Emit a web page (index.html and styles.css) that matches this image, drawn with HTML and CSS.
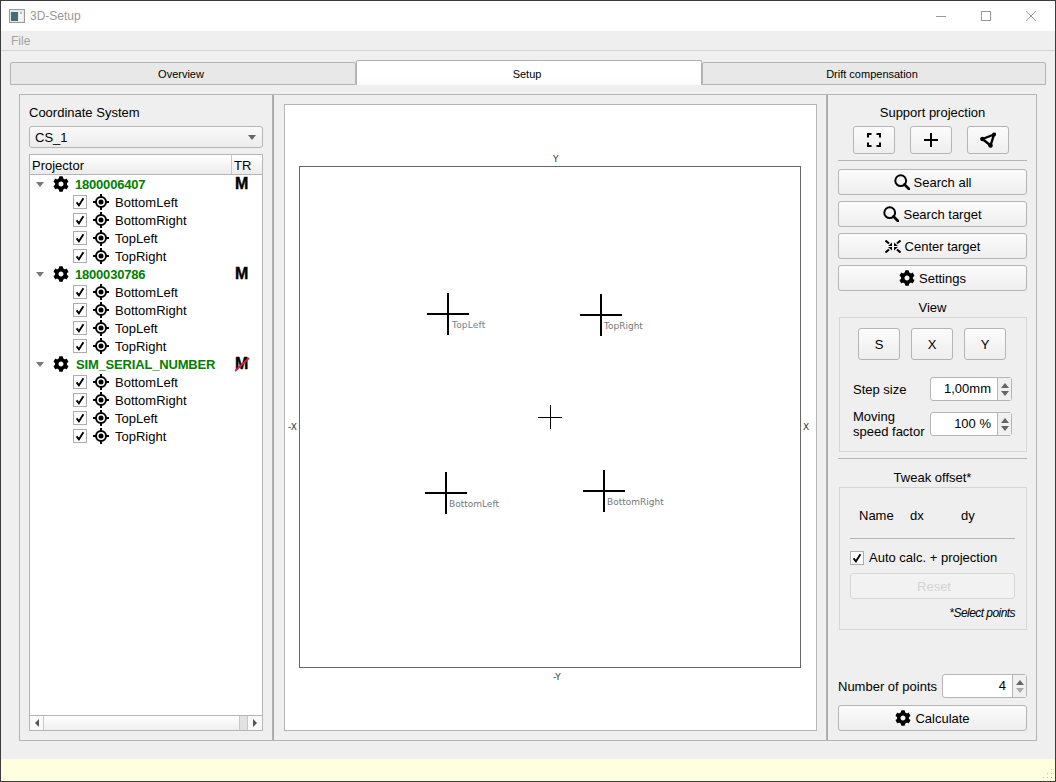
FILE: index.html
```html
<!DOCTYPE html>
<html lang="en">

<head>
    <meta charset="UTF-8">
    <title>3D-Setup</title>
    <link rel="stylesheet" href="styles.css">
</head>

<body>
    <!-- shared icons -->
    <svg class="defs" width="0" height="0">
        <symbol id="gear" viewBox="0 0 512 512">
            <path d="M487.4 315.7l-42.6-24.6c4.3-23.2 4.3-47 0-70.2l42.6-24.6c4.9-2.8 7.1-8.6 5.5-14-11.1-35.6-30-67.8-54.7-94.6-3.8-4.1-10-5.1-14.8-2.3L380.8 110c-17.9-15.4-38.5-27.3-60.8-35.1V25.8c0-5.6-3.9-10.5-9.4-11.7-36.7-8.2-74.3-7.8-109.2 0-5.5 1.2-9.4 6.1-9.4 11.7V75c-22.2 7.9-42.8 19.8-60.8 35.1L88.7 85.5c-4.9-2.8-11-1.9-14.8 2.3-24.7 26.7-43.6 58.9-54.7 94.6-1.7 5.4.6 11.2 5.5 14L67.3 221c-4.3 23.2-4.3 47 0 70.2l-42.6 24.6c-4.9 2.8-7.1 8.6-5.5 14 11.1 35.6 30 67.8 54.7 94.6 3.8 4.1 10 5.1 14.8 2.3l42.6-24.6c17.9 15.4 38.5 27.3 60.8 35.1v49.2c0 5.6 3.9 10.5 9.4 11.7 36.7 8.2 74.3 7.8 109.2 0 5.5-1.2 9.4-6.1 9.4-11.7v-49.2c22.2-7.9 42.8-19.8 60.8-35.1l42.6 24.6c4.9 2.8 11 1.9 14.8-2.3 24.7-26.7 43.6-58.9 54.7-94.6 1.5-5.5-.7-11.3-5.6-14.1zM256 336c-44.1 0-80-35.9-80-80s35.9-80 80-80 80 35.9 80 80-35.9 80-80 80z" />
        </symbol>
        <symbol id="target" viewBox="0 0 16 16">
            <circle cx="8" cy="8" r="5" fill="none" stroke="#000" stroke-width="2" />
            <circle cx="8" cy="8" r="2.500" />
            <path d="M7 0h2v3.500H7zM7 12.500h2V16H7zM0 7h3.500v2H0zM12.500 7H16v2h-3.500z" />
        </symbol>
        <symbol id="check" viewBox="0 0 14 14">
            <path d="M3 7.500l2.700 3.500L11 2.500" fill="none" stroke="#000" stroke-width="2.200" />
        </symbol>
        <symbol id="search" viewBox="0 0 16 16">
            <circle cx="6.700" cy="6.700" r="5.400" fill="none" stroke="#000" stroke-width="2" />
            <path d="M10.500 10.500L15 15" fill="none" stroke="#000" stroke-width="2.600" stroke-linecap="round" />
        </symbol>
    </svg>

    <div class="window">
        <div class="titlebar">
            <svg class="app-icon" width="16" height="14" viewBox="0 0 16 14">
                <rect x="0.500" y="0.500" width="15" height="13" fill="#e8e8e8" stroke="#9a9a9a" />
                <rect x="2" y="3" width="7" height="9" fill="#3f6f78" />
                <rect x="10" y="3" width="4" height="9" fill="#f4f4f4" />
                <rect x="11" y="3" width="2" height="2" fill="#a9c0c8" />
            </svg>
            <span class="title">3D-Setup</span>
            <div class="win-buttons">
                <svg width="12" height="12" viewBox="0 0 12 12"><path d="M1 6.500h10" stroke="#999" /></svg>
                <svg width="12" height="12" viewBox="0 0 12 12"><rect x="1.500" y="1.500" width="9" height="9" fill="none" stroke="#999" /></svg>
                <svg width="12" height="12" viewBox="0 0 12 12"><path d="M1 1l10 10M11 1L1 11" stroke="#999" /></svg>
            </div>
        </div>

        <div class="menubar"><span>File</span></div>

        <div class="tabs">
            <div class="tab">Overview</div>
            <div class="tab active">Setup</div>
            <div class="tab">Drift compensation</div>
        </div>

        <div class="main">
            <div class="left-panel">
                <div class="label">Coordinate System</div>
                <div class="combo">
                    <span>CS_1</span>
                    <span class="combo-arrow"></span>
                </div>

                <div class="tree">
                    <div class="tree-header">
                        <span class="col-name">Projector</span>
                        <span class="col-tr">TR</span>
                    </div>
                    <div class="tree-body">
                        <div class="row parent">
                            <span class="twisty"></span>
                            <svg class="gear-icon"><use href="#gear" /></svg>
                            <span class="serial">1800006407</span>
                            <span class="tr-mark">M</span>
                        </div>
                        <div class="row child"><span class="check"><svg><use href="#check" /></svg></span><svg class="target-icon"><use href="#target" /></svg><span>BottomLeft</span></div>
                        <div class="row child"><span class="check"><svg><use href="#check" /></svg></span><svg class="target-icon"><use href="#target" /></svg><span>BottomRight</span></div>
                        <div class="row child"><span class="check"><svg><use href="#check" /></svg></span><svg class="target-icon"><use href="#target" /></svg><span>TopLeft</span></div>
                        <div class="row child"><span class="check"><svg><use href="#check" /></svg></span><svg class="target-icon"><use href="#target" /></svg><span>TopRight</span></div>

                        <div class="row parent">
                            <span class="twisty"></span>
                            <svg class="gear-icon"><use href="#gear" /></svg>
                            <span class="serial">1800030786</span>
                            <span class="tr-mark">M</span>
                        </div>
                        <div class="row child"><span class="check"><svg><use href="#check" /></svg></span><svg class="target-icon"><use href="#target" /></svg><span>BottomLeft</span></div>
                        <div class="row child"><span class="check"><svg><use href="#check" /></svg></span><svg class="target-icon"><use href="#target" /></svg><span>BottomRight</span></div>
                        <div class="row child"><span class="check"><svg><use href="#check" /></svg></span><svg class="target-icon"><use href="#target" /></svg><span>TopLeft</span></div>
                        <div class="row child"><span class="check"><svg><use href="#check" /></svg></span><svg class="target-icon"><use href="#target" /></svg><span>TopRight</span></div>

                        <div class="row parent">
                            <span class="twisty"></span>
                            <svg class="gear-icon"><use href="#gear" /></svg>
                            <span class="serial sim">SIM_SERIAL_NUMBER</span>
                            <span class="tr-mark struck">M<svg class="strike" width="15" height="15" viewBox="0 0 15 15"><path d="M0 14L14 1" stroke="#d8203c" stroke-width="2" /></svg></span>
                        </div>
                        <div class="row child"><span class="check"><svg><use href="#check" /></svg></span><svg class="target-icon"><use href="#target" /></svg><span>BottomLeft</span></div>
                        <div class="row child"><span class="check"><svg><use href="#check" /></svg></span><svg class="target-icon"><use href="#target" /></svg><span>BottomRight</span></div>
                        <div class="row child"><span class="check"><svg><use href="#check" /></svg></span><svg class="target-icon"><use href="#target" /></svg><span>TopLeft</span></div>
                        <div class="row child"><span class="check"><svg><use href="#check" /></svg></span><svg class="target-icon"><use href="#target" /></svg><span>TopRight</span></div>
                    </div>
                    <div class="hscroll">
                        <span class="scroll-btn"><i class="arrow-left"></i></span>
                        <span class="scroll-track"></span>
                        <span class="scroll-end"></span>
                        <span class="scroll-btn last"><i class="arrow-right"></i></span>
                    </div>
                </div>
            </div>

            <div class="splitter"></div>

            <div class="center-panel">
                <div class="canvas">
                    <div class="plot"></div>
                    <span class="axis ax-top">Y</span>
                    <span class="axis ax-bottom">-Y</span>
                    <span class="axis ax-left">-X</span>
                    <span class="axis ax-right">X</span>

                    <div class="cross c-tl"><span>TopLeft</span></div>
                    <div class="cross c-tr"><span>TopRight</span></div>
                    <div class="cross c-bl"><span>BottomLeft</span></div>
                    <div class="cross c-br"><span>BottomRight</span></div>
                    <div class="cross-center"></div>
                </div>
            </div>

            <div class="splitter"></div>

            <div class="right-panel">
                <div class="label center">Support projection</div>
                <div class="icon-row">
                    <button class="btn icon-btn">
                        <svg width="14" height="14" viewBox="0 0 14 14"><path d="M1 4.500V1h3.500M9.500 1H13v3.500M13 9.500V13H9.500M4.500 13H1V9.500" fill="none" stroke="#000" stroke-width="2" /></svg>
                    </button>
                    <button class="btn icon-btn">
                        <svg width="14" height="14" viewBox="0 0 14 14"><path d="M7 0v14M0 7h14" stroke="#000" stroke-width="2" /></svg>
                    </button>
                    <button class="btn icon-btn">
                        <svg width="16" height="16" viewBox="0 0 16 16"><path d="M2.500 7L14 2.500L10.500 13.500Z" fill="none" stroke="#000" stroke-width="2.400" /><circle cx="2.500" cy="7" r="2.300" /><circle cx="14" cy="2.500" r="2" /><circle cx="10.500" cy="13.500" r="2.300" /></svg>
                    </button>
                </div>
                <div class="sep sep-top"></div>

                <div class="action-list">
                    <button class="btn action"><svg width="16" height="16"><use href="#search" /></svg>Search all</button>
                    <button class="btn action"><svg width="16" height="16"><use href="#search" /></svg>Search target</button>
                    <button class="btn action">
                        <svg width="16" height="13" viewBox="0 0 16 13"><path d="M.5 .5l3.500 3M15.500 .5l-3.500 3M.5 12.500l3.500-3M15.500 12.500l-3.500-3" stroke="#000" stroke-width="2" /><path d="M7 6V2.500L3 6zM9 6V2.500L13 6zM7 7v3.500L3 7zM9 7v3.500L13 7z" /></svg>
                        Center target
                    </button>
                    <button class="btn action"><svg class="gear-icon"><use href="#gear" /></svg>Settings</button>
                </div>

                <div class="label center view-title">View</div>
                <div class="box view-box">
                    <div class="view-buttons">
                        <button class="btn view-btn">S</button>
                        <button class="btn view-btn">X</button>
                        <button class="btn view-btn">Y</button>
                    </div>
                    <div class="field step-field">
                        <span>Step size</span>
                        <div class="spin">
                            <span class="spin-value">1,00mm</span>
                            <span class="spin-arrows"><i class="up"></i><i class="down"></i></span>
                        </div>
                    </div>
                    <div class="field speed-field">
                        <span>Moving<br>speed factor</span>
                        <div class="spin">
                            <span class="spin-value">100 %</span>
                            <span class="spin-arrows"><i class="up"></i><i class="down"></i></span>
                        </div>
                    </div>
                </div>

                <div class="sep sep-mid"></div>

                <div class="label center tweak-title">Tweak offset*</div>
                <div class="box tweak-box">
                    <div class="offset-head">
                        <span class="h-name">Name</span>
                        <span class="h-dx">dx</span>
                        <span>dy</span>
                    </div>
                    <div class="sep offset-sep"></div>
                    <div class="auto-row">
                        <span class="check"><svg><use href="#check" /></svg></span>
                        <span>Auto calc. + projection</span>
                    </div>
                    <button class="btn reset" disabled>Reset</button>
                    <div class="note">*Select points</div>
                </div>

                <div class="points-row">
                    <span>Number of points</span>
                    <div class="spin points-spin">
                        <span class="spin-value">4</span>
                        <span class="spin-arrows"><i class="up"></i><i class="down faded"></i></span>
                    </div>
                </div>
                <button class="btn action calculate"><svg class="gear-icon"><use href="#gear" /></svg>Calculate</button>
            </div>
        </div>

        <div class="statusbar">
            <svg class="grip" width="14" height="12" viewBox="0 0 14 12" fill="#c4c4c4">
                <rect x="11" y="1" width="1" height="1" />
                <rect x="7" y="5" width="1" height="1" /><rect x="11" y="5" width="1" height="1" />
                <rect x="3" y="9" width="1" height="1" /><rect x="7" y="9" width="1" height="1" /><rect x="11" y="9" width="1" height="1" />
            </svg>
        </div>
    </div>
</body>

</html>
```

FILE: styles.css
```css
* {
    box-sizing: border-box;
}

body {
    margin: 0;
    font-family: "Liberation Sans", Arial, sans-serif;
    font-size: 13px;
    color: #000;
    overflow: hidden;
}

button {
    font: inherit;
    color: inherit;
}

.defs {
    position: absolute;
}

.window {
    width: 1056px;
    height: 782px;
    display: flex;
    flex-direction: column;
    background-color: #efefef;
    border: 1px solid #3c3c3c;
}

/* title and menu */
.titlebar {
    height: 30px;
    display: flex;
    align-items: center;
    background-color: #fff;
    padding-left: 8px;
}

.title {
    margin-left: 5px;
    font-size: 12px;
    color: #999;
}

.win-buttons {
    margin-left: auto;
    display: flex;
    gap: 33px;
    padding-right: 18px;
}

.menubar {
    height: 20px;
    padding-left: 10px;
    line-height: 20px;
    font-size: 12px;
    color: #a2a2a2;
    border-bottom: 1px solid #d2d2d2;
}

/* tabs */
.tabs {
    display: flex;
    height: 25px;
    margin: 9px 9px 0;
}

.tab {
    width: 346px;
    height: 23px;
    margin-top: 2px;
    padding-right: 4px;
    text-align: center;
    font-size: 11px;
    line-height: 23px;
    background-color: #e8e8e8;
    border: 1px solid #b4b4b4;
    border-radius: 2px 2px 0 0;
}

.tab:last-child {
    width: 344px;
}

.tab.active {
    height: 25px;
    margin-top: 0;
    line-height: 26px;
    background: linear-gradient(#fff, #fff 70%, #fbfbfb);
    border-bottom: none;
}

/* main split */
.main {
    height: 647px;
    margin: 9px 18px 0;
    display: flex;
    border: 1px solid #b5b5b5;
}

.left-panel {
    width: 252px;
    padding: 9px;
    display: flex;
    flex-direction: column;
}

.splitter {
    width: 2px;
    background-color: #7fb2e0;
    border-left: 1px solid #b0b0b0;
}

.center-panel {
    flex: 1;
    padding: 9px 9px 9px 10px;
    display: flex;
}

.right-panel {
    width: 208px;
    padding: 9px 9px 9px 10px;
    display: flex;
    flex-direction: column;
}

.label {
    height: 16px;
    line-height: 18px;
}

.center {
    text-align: center;
}

/* combo box */
.combo {
    height: 22px;
    margin-top: 6px;
    padding: 0 6px 0 5px;
    display: flex;
    align-items: center;
    justify-content: space-between;
    background: linear-gradient(#fafafa, #ececec);
    border: 1px solid #b5b5b5;
    border-radius: 3px;
}

.combo-arrow {
    border-left: 4px solid transparent;
    border-right: 4px solid transparent;
    border-top: 5px solid #666;
}

/* projector tree */
.tree {
    flex: 1;
    margin-top: 6px;
    display: flex;
    flex-direction: column;
    background-color: #fff;
    border: 1px solid #b5b5b5;
}

.tree-header {
    height: 20px;
    display: flex;
    line-height: 21px;
    background: linear-gradient(#fff, #ececec);
    border-bottom: 1px solid #b5b5b5;
}

.col-name {
    width: 202px;
    padding-left: 2px;
    border-right: 1px solid #c8c8c8;
}

.col-tr {
    padding-left: 2px;
}

.tree-body {
    flex: 1;
}

.row {
    height: 18px;
    display: flex;
    align-items: center;
}

.parent {
    padding-left: 6px;
}

.child {
    padding-left: 43px;
}

.twisty {
    width: 0;
    border-left: 4px solid transparent;
    border-right: 4px solid transparent;
    border-top: 5px solid #777;
}

.gear-icon {
    width: 16px;
    height: 16px;
}

.parent .gear-icon {
    margin-left: 9px;
}

.serial {
    width: 160px;
    margin-left: 6px;
    font-weight: bold;
    color: #008000;
    letter-spacing: -0.2px;
}

.serial.sim {
    margin-left: 7px;
    width: 159px;
    letter-spacing: -0.18px;
}

.tr-mark {
    position: relative;
    font-size: 16px;
    font-weight: bold;
    line-height: 16px;
    -webkit-text-stroke: 0.4px #000;
}

.strike {
    position: absolute;
    left: 0;
    top: 1px;
}

.check {
    width: 14px;
    height: 14px;
    flex: none;
    background-color: #fff;
    border: 1px solid #adadad;
    display: flex;
}

.check svg {
    width: 12px;
    height: 12px;
}

.target-icon {
    width: 16px;
    height: 16px;
    margin: 0 6px;
}

/* horizontal scrollbar */
.hscroll {
    height: 15px;
    display: flex;
    border-top: 1px solid #b5b5b5;
}

.scroll-btn {
    width: 14px;
    display: flex;
    align-items: center;
    justify-content: center;
    background-color: #fafafa;
    border-right: 1px solid #c8c8c8;
}

.scroll-btn.last {
    border-right: none;
}

.scroll-track {
    flex: 1;
    background: linear-gradient(#fff, #efefef);
    border-right: 1px solid #c8c8c8;
}

.scroll-end {
    width: 8px;
    background-color: #e2e2e2;
    border-right: 1px solid #c8c8c8;
}

.arrow-left {
    border-top: 4px solid transparent;
    border-bottom: 4px solid transparent;
    border-right: 4px solid #555;
}

.arrow-right {
    border-top: 4px solid transparent;
    border-bottom: 4px solid transparent;
    border-left: 4px solid #555;
}

/* canvas with the points */
.canvas {
    flex: 1;
    position: relative;
    background-color: #fff;
    border: 1px solid #b5b5b5;
}

.plot {
    position: absolute;
    left: 14px;
    top: 61px;
    width: 502px;
    height: 502px;
    border: 1px solid #666;
}

.axis {
    position: absolute;
    font-family: "DejaVu Sans", sans-serif;
    font-size: 9px;
    line-height: 12px;
    color: #333;
}

.ax-top { left: 268px; top: 48px; }
.ax-bottom { left: 268px; top: 566px; }
.ax-left { left: 3px; top: 316px; }
.ax-right { left: 518px; top: 316px; }

.cross {
    position: absolute;
    width: 42px;
    height: 42px;
}

.cross::before {
    content: "";
    position: absolute;
    left: 20px;
    top: 0;
    width: 2px;
    height: 42px;
    background-color: #000;
}

.cross::after {
    content: "";
    position: absolute;
    left: 0;
    top: 20px;
    width: 42px;
    height: 2px;
    background-color: #000;
}

.cross span {
    position: absolute;
    left: 24px;
    top: 26px;
    font-family: "DejaVu Sans", sans-serif;
    font-size: 9px;
    line-height: 12px;
    color: #777;
    white-space: nowrap;
}

.c-tl { left: 142px; top: 188px; }
.c-tr { left: 295px; top: 189px; }
.c-bl { left: 140px; top: 367px; }
.c-br { left: 298px; top: 365px; }

.c-tl span {
    left: 25px;
    color: #6f7f94;
    letter-spacing: 0.2px;
}

.cross-center {
    position: absolute;
    left: 253px;
    top: 300px;
    width: 24px;
    height: 24px;
    background:
        linear-gradient(#000, #000) 12px 0 / 1px 24px no-repeat,
        linear-gradient(#000, #000) 0 12px / 24px 1px no-repeat;
}

/* right column */
.btn {
    padding: 0;
    display: flex;
    align-items: center;
    justify-content: center;
    background: linear-gradient(#fcfcfc, #eeeeee);
    border: 1px solid #b5b5b5;
    border-radius: 3px;
}

.icon-row {
    margin-top: 6px;
    padding-left: 15px;
    display: flex;
    gap: 15px;
}

.icon-btn {
    width: 42px;
    height: 28px;
}

.sep {
    height: 1px;
    flex: none;
    background-color: #b5b5b5;
}

.sep-top {
    margin-top: 6px;
}

.action-list {
    margin-top: 8px;
    display: flex;
    flex-direction: column;
    gap: 6px;
}

.action {
    height: 26px;
    gap: 4px;
    width: 189px;
    flex: none;
}

.view-title {
    margin-top: 8px;
}

.box {
    margin-left: 1px;
    width: 188px;
    flex: none;
    border: 1px solid #d6d6d6;
}

.view-box {
    height: 135px;
    margin-top: 2px;
    padding: 10px 14px 0 13px;
}

.view-buttons {
    display: flex;
    gap: 11px;
    padding-left: 5px;
}

.view-btn {
    width: 42px;
    height: 32px;
}

.field {
    display: flex;
    align-items: center;
    justify-content: space-between;
}

.step-field {
    margin-top: 17px;
}

.speed-field {
    margin-top: 8px;
    line-height: 15px;
}

.spin {
    width: 82px;
    height: 24px;
    display: flex;
    background-color: #fff;
    border: 1px solid #b5b5b5;
    border-radius: 3px;
}

.spin-value {
    flex: 1;
    text-align: right;
    padding-right: 6px;
    font-size: 13px;
    line-height: 22px;
}

.spin-arrows {
    width: 14px;
    display: flex;
    flex-direction: column;
    align-items: center;
    justify-content: center;
    gap: 3px;
    background-color: #f0f0f0;
    border-left: 1px solid #b5b5b5;
}

.spin-arrows .up {
    border-left: 4px solid transparent;
    border-right: 4px solid transparent;
    border-bottom: 5px solid #666;
}

.spin-arrows .down {
    border-left: 4px solid transparent;
    border-right: 4px solid transparent;
    border-top: 5px solid #666;
}

.spin-arrows .faded {
    border-top-color: #aaa;
}

.sep-mid {
    margin-top: 6px;
}

.tweak-title {
    margin-top: 10px;
}

.tweak-box {
    height: 143px;
    margin-top: 2px;
    padding: 19px 11px 0 10px;
}

.offset-head {
    display: flex;
    height: 16px;
    padding-left: 9px;
    line-height: 18px;
}

.h-name {
    width: 51px;
}

.h-dx {
    width: 51px;
}

.offset-sep {
    margin-top: 15px;
}

.auto-row {
    margin-top: 11px;
    display: flex;
    align-items: center;
    gap: 5px;
}

.reset {
    width: 165px;
    height: 26px;
    margin-top: 8px;
    padding-left: 3px;
    color: #d2d2d2;
    background: #f2f2f2;
    border-color: #d6d6d6;
}

.note {
    margin-top: 7px;
    text-align: right;
    font-size: 12px;
    font-style: italic;
    letter-spacing: -0.55px;
    line-height: 14px;
}

.points-row {
    margin-top: auto;
    display: flex;
    align-items: center;
    justify-content: space-between;
}

.points-spin {
    width: 85px;
}

.calculate {
    margin-top: 7px;
}

/* status bar */
.statusbar {
    flex: 1;
    margin-top: 18px;
    position: relative;
    background-color: #ffffdf;
}

.grip {
    position: absolute;
    right: 1px;
    bottom: 1px;
}
```
